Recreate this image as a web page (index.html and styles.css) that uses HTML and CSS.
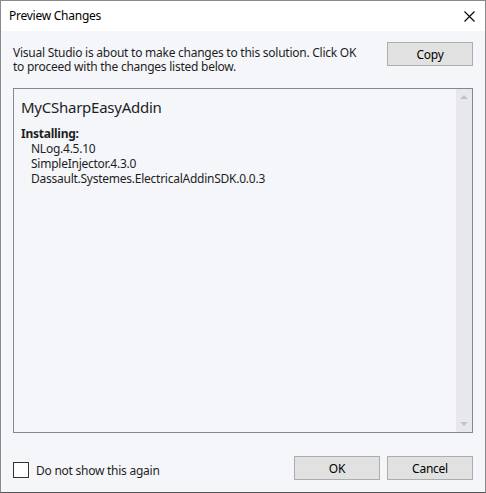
FILE: index.html
```html
<!DOCTYPE html>
<html lang="en">
<head>
    <meta charset="UTF-8">
    <title>Preview Changes</title>
    <link rel="stylesheet" href="styles.css">
</head>
<body>
    <div class="dialog">
        <div class="titlebar">
            <span class="title">Preview Changes</span>
            <span class="close">
                <svg width="11" height="11" viewBox="0 0 11 11"><path d="M0.5 0.5 L10.5 10.5 M10.5 0.5 L0.5 10.5" stroke="#000" stroke-width="1.1" fill="none"/></svg>
            </span>
        </div>
        <div class="content">
            <div class="intro">
                <p>Visual Studio is about to make changes to this solution. Click OK to proceed with the changes listed below.</p>
                <button class="btn">Copy</button>
            </div>
            <div class="changes">
                <div class="changes-body">
                    <div class="project">MyCSharpEasyAddin</div>
                    <div class="action">Installing:</div>
                    <ul class="packages">
                        <li>NLog.4.5.10</li>
                        <li>SimpleInjector.4.3.0</li>
                        <li>Dassault.Systemes.ElectricalAddinSDK.0.0.3</li>
                    </ul>
                </div>
                <div class="scrollbar">
                    <span class="arrow up"></span>
                    <span class="arrow down"></span>
                </div>
            </div>
            <div class="footer">
                <label class="check"><span class="box"></span>Do not show this again</label>
                <div class="buttons">
                    <button class="btn">OK</button>
                    <button class="btn">Cancel</button>
                </div>
            </div>
        </div>
    </div>
</body>
</html>
```

FILE: styles.css
```css
body {
    margin: 0;
    padding: 0;
    font-family: "Noto Sans", "Open Sans", sans-serif;
    font-size: 12px;
    letter-spacing: -0.25px;
    color: #1e1e1e;
    background-color: #fff;
}

.dialog {
    width: 484px;
    height: 491px;
    border: 1px solid #8a8a8a;
    border-bottom-color: #555;
    display: flex;
    flex-direction: column;
    background-color: #f5f6fa;
}

.titlebar {
    height: 30px;
    background-color: #fff;
    display: flex;
    align-items: center;
    justify-content: space-between;
    padding: 0 10px 0 8px;
}

.title {
    font-size: 12px;
    color: #000;
    margin-top: -1px;
}

.close {
    display: flex;
}

.content {
    flex: 1;
    padding: 11px 12px 12px 12px;
    display: flex;
    flex-direction: column;
}

.intro {
    display: flex;
    justify-content: space-between;
    align-items: flex-start;
    height: 46px;
}

.intro p {
    margin: 4px 0 0 0;
    width: 346px;
    line-height: 14px;
}

.btn {
    width: 86px;
    height: 24px;
    font-family: inherit;
    font-size: 12px;
    letter-spacing: inherit;
    color: #000;
    background-color: #e1e1e1;
    border: 1px solid #adadad;
    padding: 0;
}

.changes {
    height: 343px;
    border: 1px solid #828790;
    display: flex;
    background-color: #f5f6fa;
}

.changes-body {
    flex: 1;
    padding: 8px 0 0 7px;
}

.project {
    font-size: 15px;
    line-height: 20px;
    margin-bottom: 9px;
}

.action {
    font-weight: bold;
    line-height: 15px;
}

.packages {
    list-style: none;
    margin: 0;
    padding: 0 0 0 10px;
}

.packages li {
    line-height: 15px;
}

.scrollbar {
    width: 16px;
    background-color: #e8e8ec;
    display: flex;
    flex-direction: column;
    justify-content: space-between;
    align-items: center;
    padding: 6px 0;
}

.arrow {
    width: 0;
    height: 0;
    border-left: 4px solid transparent;
    border-right: 4px solid transparent;
}

.arrow.up {
    border-bottom: 4px solid #c2c3c9;
}

.arrow.down {
    border-top: 4px solid #c2c3c9;
}

.footer {
    margin-top: auto;
    display: flex;
    justify-content: space-between;
    align-items: center;
}

.check {
    display: flex;
    align-items: center;
    gap: 7px;
    margin-top: 4px;
}

.box {
    width: 14px;
    height: 14px;
    border: 1px solid #333;
    background-color: #fff;
}

.buttons {
    display: flex;
    gap: 7px;
}
```
